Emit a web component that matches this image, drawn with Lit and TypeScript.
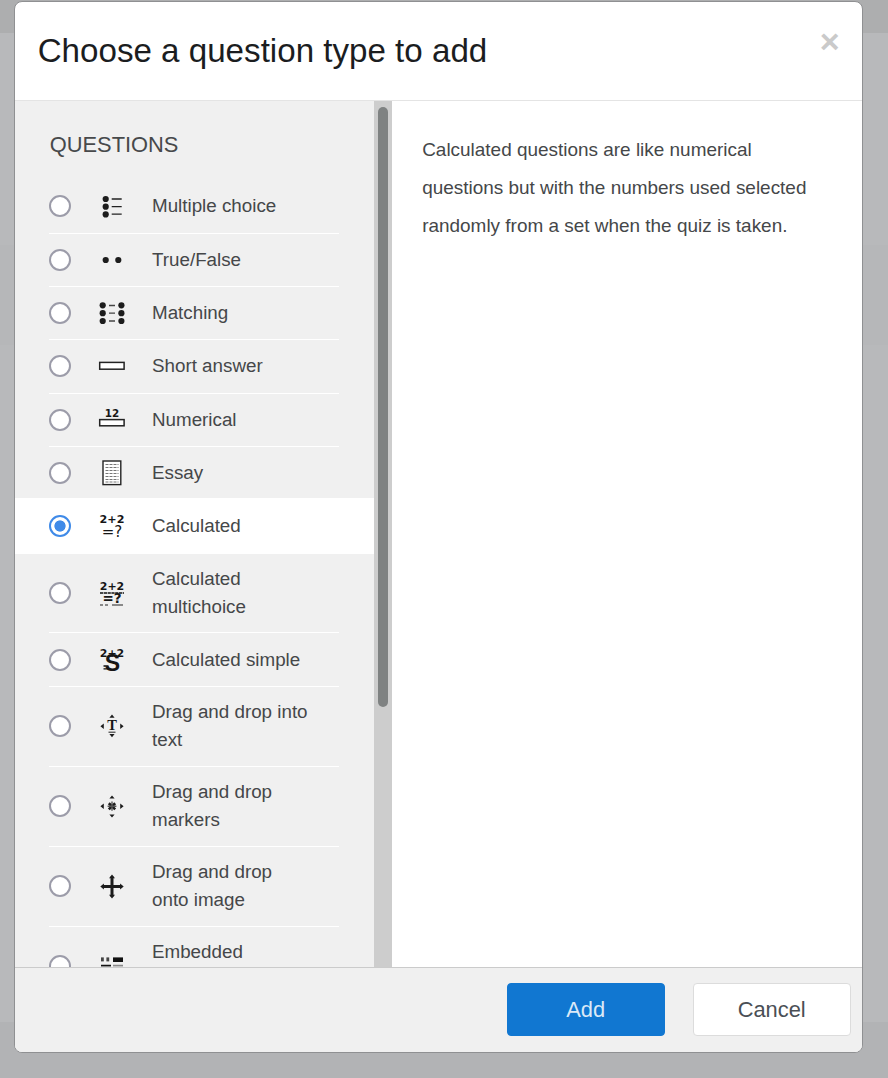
import { LitElement, html, css, svg } from "lit";
import { customElement } from "lit/decorators.js";

const ink = "#1c1c1c";
const arrows = (top: number, bottom: number) => svg`
  <path fill="${ink}" d="M13 ${top}l-2.6 3.2h5.2zM13 ${bottom}l-2.6-3.2h5.2zM1.4 13.2l3.4-2.7v5.4zM24.6 13.2l-3.4-2.7v5.4z"/>`;

const icons: Record<string, unknown> = {
  multi: svg`<g fill="${ink}"><circle cx="6.7" cy="6" r="3.1"/><circle cx="6.7" cy="13.7" r="3.1"/><circle cx="6.7" cy="21.4" r="3.1"/></g>
    <path stroke="#222" stroke-width="1.3" d="M12.7 6h10M12.7 13.6h10M12.7 21.2h10"/>`,
  tf: svg`<g fill="${ink}"><circle cx="6.7" cy="13" r="3.1"/><circle cx="19.3" cy="13" r="3.1"/></g>`,
  match: svg`<g fill="${ink}"><circle cx="3.7" cy="5.3" r="3.1"/><circle cx="3.7" cy="13.2" r="3.1"/><circle cx="3.7" cy="21" r="3.1"/>
    <circle cx="22.4" cy="5.3" r="3.1"/><circle cx="22.4" cy="13.2" r="3.1"/><circle cx="22.4" cy="21" r="3.1"/></g>
    <path stroke="#444" stroke-width="1.3" d="M10 5.5h6M10 13.2h6M10 21h6"/>`,
  short: svg`<rect x="0.7" y="9.4" width="24.4" height="6.8" fill="#fff" stroke="#222" stroke-width="1.5"/>`,
  num: svg`<text x="13" y="9.7" text-anchor="middle" class="d b" font-size="10.4">12</text>
    <rect x="0.7" y="12.6" width="24.4" height="6.2" fill="#fff" stroke="#222" stroke-width="1.5"/>`,
  essay: svg`<rect x="4" y="1" width="17.8" height="23.6" fill="#fff" stroke="#222" stroke-width="1.4"/>
    <path stroke="#777" stroke-width="1.1" stroke-dasharray="3 1" d="M6.5 4.5h13M6.5 7.5h13M6.5 10.5h13M6.5 13.5h13M6.5 16.5h13M6.5 19.5h13M6.5 22h13"/>`,
  calc: svg`<text x="13" y="10.3" text-anchor="middle" class="d b" font-size="11.2">2+2</text>
    <text x="13" y="23.8" text-anchor="middle" class="d" font-size="15">=?</text>`,
  calcm: svg`<text x="13" y="10" text-anchor="middle" class="d b" font-size="11">2+2</text>
    <path stroke="#111" stroke-width="1.5" stroke-dasharray="3.2 .6" d="M1 13h24"/>
    <text x="13" y="23.2" text-anchor="middle" class="d b" font-size="13.5">=?</text>
    <path stroke="#222" stroke-width="1" d="M1 25h3M6 25h3M13 25h11"/>`,
  calcs: svg`<text x="13" y="9.7" text-anchor="middle" class="d b" font-size="11">2+2</text>
    <text x="13.5" y="24.2" text-anchor="middle" class="l" font-size="23">S</text>
    <path stroke="#111" stroke-width="1.3" d="M4.5 19h5M4.5 21.8h5"/>`,
  ddtext: svg`${arrows(1.6, 24.2)}<text x="13" y="17.2" text-anchor="middle" class="s" font-size="14.5">T</text>
    <path stroke="#333" stroke-width="1.1" d="M9.5 19.2h7"/>`,
  ddmark: svg`${arrows(2.4, 24.6)}<path stroke="${ink}" stroke-width="2.6" d="M9.8 10.2l6.4 6.2M16.2 10.2l-6.4 6.2"/><path stroke="#555" stroke-width="1.4" d="M13 8.6v9.2M8.6 13.3h8.8"/>`,
  ddimg: svg`<path stroke="${ink}" stroke-width="3" d="M13 3.5v20M3.5 13.4h19"/>
    <path fill="${ink}" d="M13 1.6l-3 3.6h6zM13 25.4l-3-3.6h6zM1.3 13.4l3.6-3v6zM24.7 13.4l-3.6-3v6z"/>`,
  embed: svg`<g fill="#444"><rect x="2" y="4.4" width="2.8" height="4"/><rect x="7.4" y="4.4" width="2.8" height="4"/></g>
    <rect x="14" y="4.4" width="10" height="4.6" fill="#111"/>
    <path stroke="#111" stroke-width="1.7" d="M2 12.6h10"/><path stroke="#888" stroke-width="1.7" d="M14 12.6h10"/>`,
};

const options = [
  ["multi", "Multiple choice"],
  ["tf", "True/False"],
  ["match", "Matching"],
  ["short", "Short answer"],
  ["num", "Numerical"],
  ["essay", "Essay"],
  ["calc", "Calculated"],
  ["calcm", "Calculated multichoice"],
  ["calcs", "Calculated simple"],
  ["ddtext", "Drag and drop into text"],
  ["ddmark", "Drag and drop markers"],
  ["ddimg", "Drag and drop onto image"],
  ["embed", "Embedded answers (Cloze)"],
];

@customElement("app-root")
export class AppRoot extends LitElement {
  static styles = css`
    :host {
      display: block;
      font-family: "Liberation Sans", Arial, sans-serif;
      color: #454749;
    }
    .page {
      box-sizing: border-box;
      height: 1078px;
      overflow: hidden;
      padding: 0.7px 25.3px 0 14px;
      background: linear-gradient(
        to bottom,
        #adaeaf 0 33px,
        #b8b9bb 33px 245px,
        #b6b7b9 245px 345px,
        #b8b9bb 345px 1022px,
        #b2b3b5 1022px
      );
    }
    .modal {
      box-sizing: border-box;
      height: 1052px;
      display: flex;
      flex-direction: column;
      border: 1.33px solid #8f9092;
      border-radius: 8px;
      overflow: hidden;
      background: #fff;
    }
    .head {
      flex: none;
      box-sizing: border-box;
      height: 99px;
      display: flex;
      justify-content: space-between;
      align-items: flex-start;
      padding: 0 22px 0 22.7px;
      border-bottom: 1.33px solid #e4e4e4;
    }
    h1 {
      margin: 29px 0 0;
      font-size: 33.15px;
      line-height: 40px;
      font-weight: 400;
      color: #1b1d1f;
    }
    .close {
      font-size: 34px;
      line-height: 34px;
      font-weight: 700;
      color: #cacaca;
      margin-top: 22px;
    }
    .body {
      flex: 1;
      min-height: 0;
      display: flex;
    }
    .left {
      flex: none;
      width: 358.7px;
      background: #f0f0f0;
      overflow: hidden;
    }
    h2 {
      margin: 0;
      padding: 31px 0 22.6px 34.7px;
      font-size: 21.87px;
      line-height: 26px;
      font-weight: 400;
      color: #47494b;
    }
    .row {
      position: relative;
      padding: 0 35px 0 34px;
    }
    .row.sel {
      background: #fff;
      z-index: 1;
      margin-top: -2.2px;
      margin-bottom: -0.3px;
    }
    .inner {
      box-sizing: border-box;
      min-height: 53.33px;
      padding: 11.5px 0;
      display: flex;
      align-items: center;
      border-bottom: 1.33px solid #fff;
    }
    .sel .inner {
      min-height: 55.6px;
      border-bottom: none;
    }
    input {
      appearance: none;
      flex: none;
      box-sizing: border-box;
      width: 22px;
      height: 22px;
      margin: 0;
      border-radius: 50%;
      border: 2.8px solid #9c9ca9;
      background: #fff;
    }
    input:checked {
      border-color: #3f8ae8;
      background: radial-gradient(circle, #3f8ae8 0 5.2px, #fff 6px);
    }
    svg {
      flex: none;
      width: 26px;
      height: 26px;
      margin: 0 27px 0 28px;
      overflow: visible;
    }
    svg text { fill: #161616; }
    svg .d { font-family: "DejaVu Sans", sans-serif; }
    svg .b { font-weight: 700; }
    svg .l { font-family: "Liberation Sans", sans-serif; font-weight: 700; }
    svg .s { font-family: "Liberation Serif", serif; font-weight: 700; }
    .label {
      width: 159px;
      font-size: 18.8px;
      line-height: 28px;
    }
    .track {
      flex: none;
      box-sizing: border-box;
      width: 18.5px;
      padding: 6px 4.7px 0 4.3px;
      background: #cdcdcd;
    }
    .thumb {
      height: 600px;
      border-radius: 5px;
      background: #7f8282;
    }
    .desc {
      flex: 1;
      margin: 0;
      padding: 30px 40px 0 30px;
      font-size: 18.95px;
      line-height: 38px;
    }
    .foot {
      flex: none;
      box-sizing: border-box;
      height: 84.3px;
      display: flex;
      justify-content: flex-end;
      align-items: flex-start;
      gap: 28px;
      padding: 14.7px 11px 0 0;
      background: #f0f0f0;
      border-top: 1.33px solid #cbcbcb;
    }
    button {
      box-sizing: border-box;
      width: 158px;
      height: 53.33px;
      border-radius: 4px;
      font: 400 21.87px "Liberation Sans", Arial, sans-serif;
    }
    .add {
      background: #1177d1;
      border: 1.33px solid #1177d1;
      color: #dbe9f7;
    }
    .cancel {
      background: #fff;
      border: 1.33px solid #dcdcdc;
      color: #4a4f55;
    }
  `;

  render() {
    return html`
      <div class="page">
        <div class="modal">
          <div class="head">
            <h1>Choose a question type to add</h1>
            <span class="close">×</span>
          </div>
          <div class="body">
            <div class="left">
              <h2>QUESTIONS</h2>
              ${options.map(
                ([id, label]) => html`
                  <div class="row ${id === "calc" ? "sel" : ""}">
                    <div class="inner">
                      <input type="radio" name="qtype" .checked=${id === "calc"} />
                      <svg viewBox="0 0 26 26">${icons[id]}</svg>
                      <span class="label">${label}</span>
                    </div>
                  </div>
                `
              )}
            </div>
            <div class="track"><div class="thumb"></div></div>
            <p class="desc">
              Calculated questions are like numerical questions but with the numbers used selected
              randomly from a set when the quiz is taken.
            </p>
          </div>
          <div class="foot">
            <button class="add">Add</button>
            <button class="cancel">Cancel</button>
          </div>
        </div>
      </div>
    `;
  }
}
